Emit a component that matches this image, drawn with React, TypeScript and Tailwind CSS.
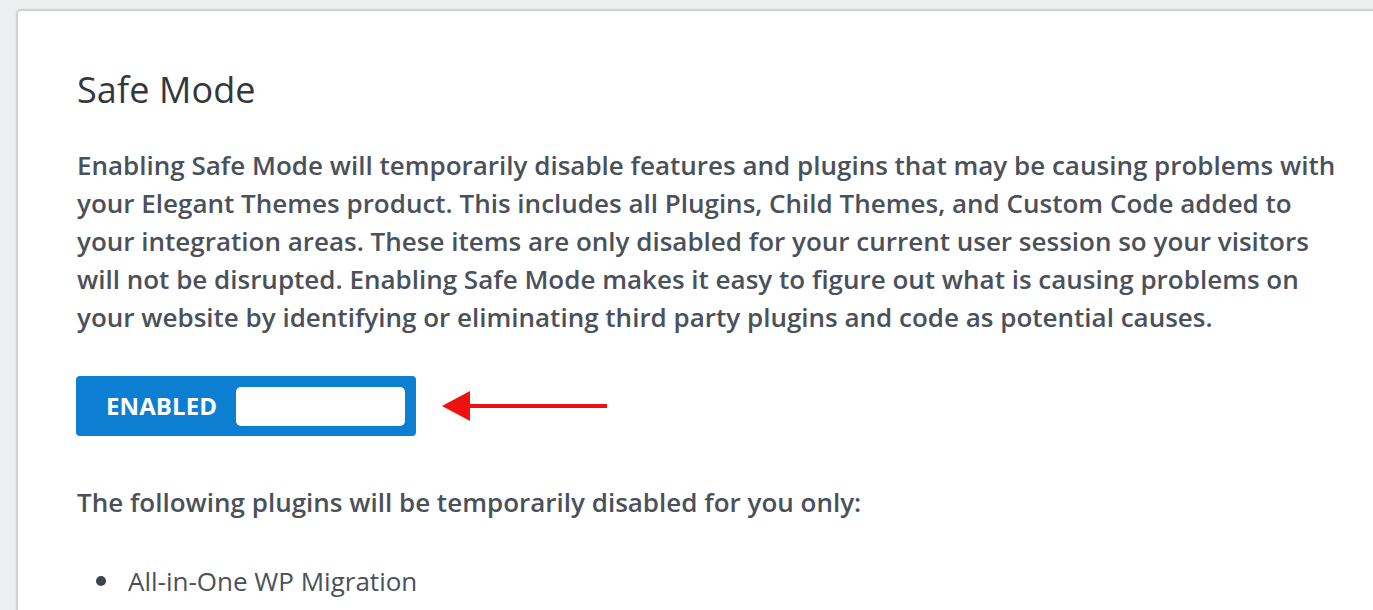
import React from "react";

export default function App() {
  return (
    <div
      className="w-[1373px] h-[610px] overflow-hidden bg-[#eeeff1] pl-[16px] pt-[9px]"
      style={{ fontFamily: '"Open Sans", "Noto Sans", sans-serif' }}
    >
      <div className="w-[1400px] h-[700px] bg-white border-2 border-[#cfd1d4] rounded-[5px] pl-[59px] pt-[57px] shadow-[0_0_2px_rgba(0,0,0,0.08)]">
        <h1 className="text-[36px] leading-[44px] font-medium text-[#32373c] tracking-[0.1px]">
          Safe Mode
        </h1>
        <p className="mt-[34px] w-[1264px] text-[26px] leading-[38px] font-semibold text-[#4b515b]">
          Enabling Safe Mode will temporarily disable features and plugins that may be causing problems with your Elegant Themes product. This includes all Plugins, Child Themes, and Custom Code added to your integration areas. These items are only disabled for your current user session so your visitors will not be disrupted. Enabling Safe Mode makes it easy to figure out what is causing problems on your website by identifying or eliminating third party plugins and code as potential causes.
        </p>
        <div className="mt-[40px] flex items-center">
          <div className="w-[340px] h-[60px] -ml-[1px] bg-[#0c7fd2] rounded-[4px] flex items-center pl-[30px] pr-[11px]">
            <span className="text-white text-[24px] font-bold tracking-[0.1px] leading-none">
              ENABLED
            </span>
            <div className="ml-auto w-[169px] h-[39px] bg-white rounded-[5px]" />
          </div>
          <svg
            width="170"
            height="34"
            viewBox="0 0 170 34"
            className="ml-[25px]"
          >
            <polygon points="1,17 29,2 29,32" fill="#ee1111" />
            <rect x="26" y="15" width="140" height="4" fill="#ee1111" />
          </svg>
        </div>
        <p className="mt-[47px] text-[26px] leading-[38px] font-semibold text-[#4b515b]">
          The following plugins will be temporarily disabled for you only:
        </p>
        <ul className="mt-[41px] text-[26px] leading-[38px] font-normal text-[#4b515b]">
          <li className="flex items-center">
            <span className="w-[10px] h-[10px] rounded-full bg-[#3c434a] ml-[19px] mr-[22px]" />
            All-in-One WP Migration
          </li>
          <li className="flex items-center">
            <span className="w-[10px] h-[10px] rounded-full bg-[#3c434a] ml-[19px] mr-[22px]" />
            Autoptimize
          </li>
        </ul>
      </div>
    </div>
  );
}
